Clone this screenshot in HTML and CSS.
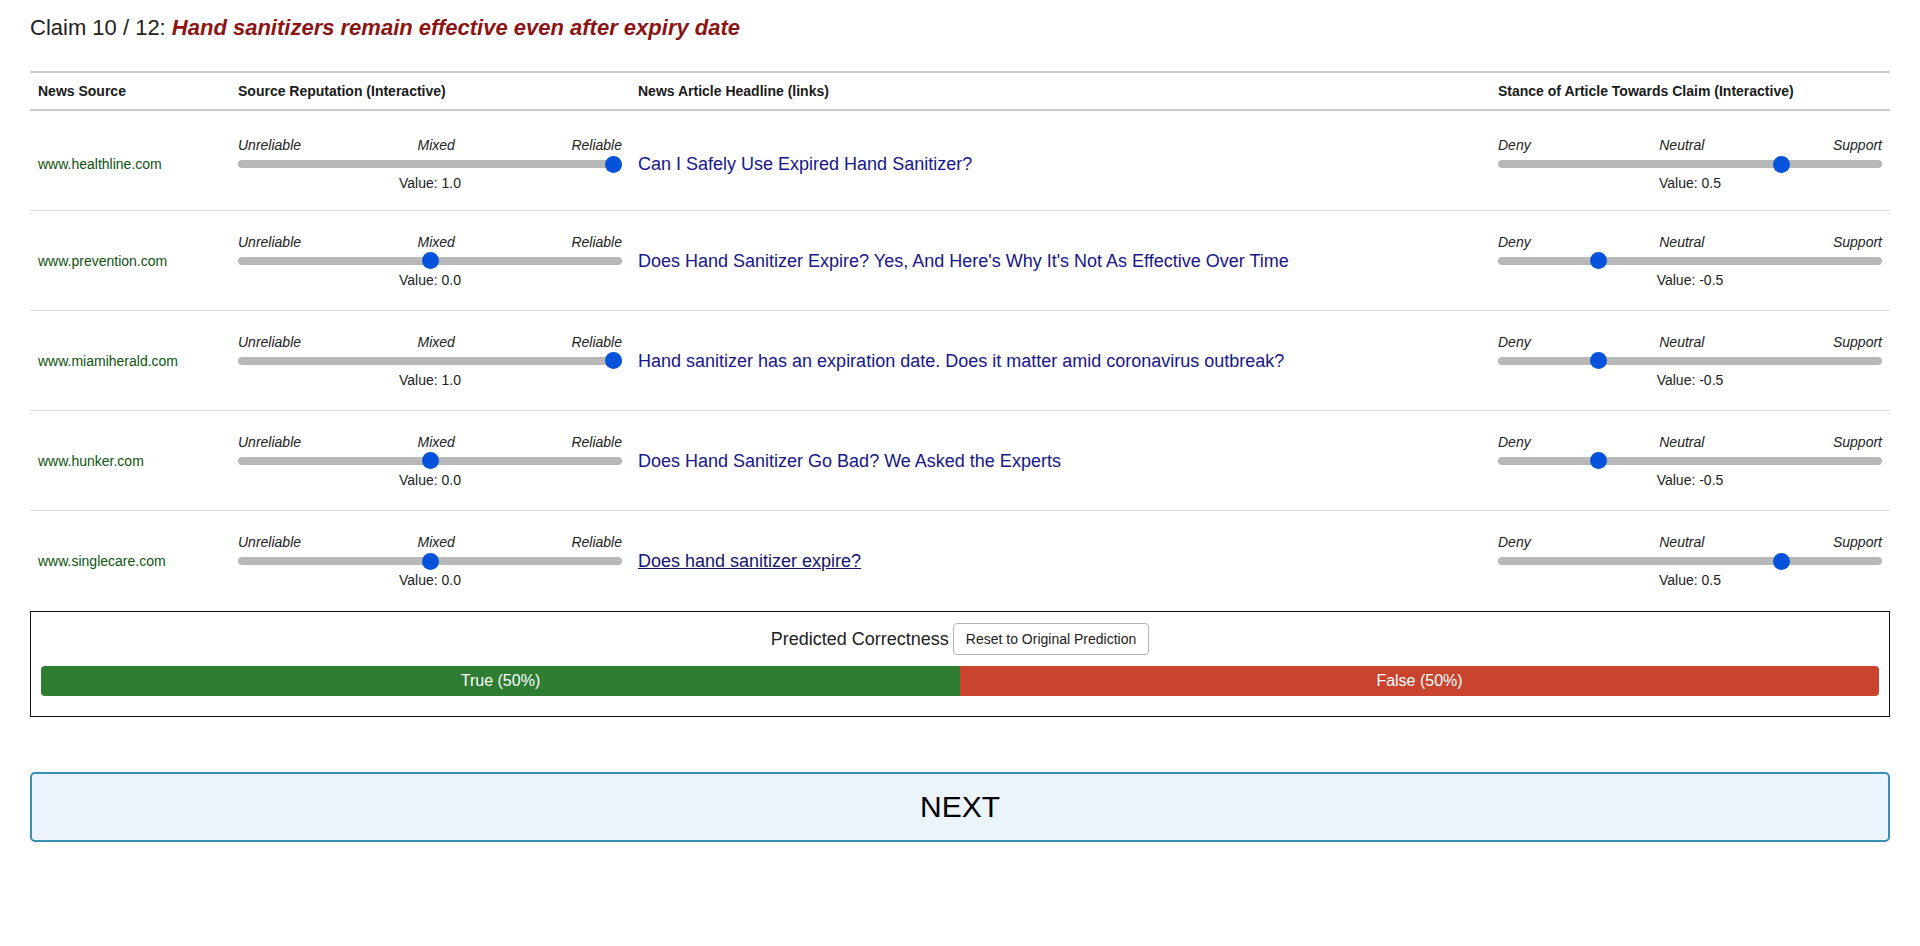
FILE: index.html
```html
<!DOCTYPE html>
<html lang="en">
<head>
<meta charset="utf-8">
<title>Claim 10 / 12</title>
<link rel="stylesheet" href="styles.css">
</head>
<body>
<div class="page">
  <h1 class="claim">Claim 10 / 12: <em class="claim-text">Hand sanitizers remain effective even after expiry date</em></h1>

  <div class="table">
    <div class="row head">
      <div class="cell">News Source</div>
      <div class="cell">Source Reputation (Interactive)</div>
      <div class="cell">News Article Headline (links)</div>
      <div class="cell">Stance of Article Towards Claim (Interactive)</div>
    </div>

    <div class="row first">
      <div class="cell source">www.healthline.com</div>
      <div class="cell">
        <div class="slider">
          <div class="labels"><span>Unreliable</span><span>Mixed</span><span>Reliable</span></div>
          <input class="range" type="range" min="-1" max="1" step="0.5" value="1">
          <div class="value">Value: 1.0</div>
        </div>
      </div>
      <div class="cell"><a class="headline" href="#">Can I Safely Use Expired Hand Sanitizer?</a></div>
      <div class="cell">
        <div class="slider">
          <div class="labels"><span>Deny</span><span>Neutral</span><span>Support</span></div>
          <input class="range" type="range" min="-1" max="1" step="0.5" value="0.5">
          <div class="value">Value: 0.5</div>
        </div>
      </div>
    </div>

    <div class="row">
      <div class="cell source">www.prevention.com</div>
      <div class="cell">
        <div class="slider">
          <div class="labels"><span>Unreliable</span><span>Mixed</span><span>Reliable</span></div>
          <input class="range" type="range" min="-1" max="1" step="0.5" value="0">
          <div class="value">Value: 0.0</div>
        </div>
      </div>
      <div class="cell"><a class="headline" href="#">Does Hand Sanitizer Expire? Yes, And Here's Why It's Not As Effective Over Time</a></div>
      <div class="cell">
        <div class="slider">
          <div class="labels"><span>Deny</span><span>Neutral</span><span>Support</span></div>
          <input class="range" type="range" min="-1" max="1" step="0.5" value="-0.5">
          <div class="value">Value: -0.5</div>
        </div>
      </div>
    </div>

    <div class="row">
      <div class="cell source">www.miamiherald.com</div>
      <div class="cell">
        <div class="slider">
          <div class="labels"><span>Unreliable</span><span>Mixed</span><span>Reliable</span></div>
          <input class="range" type="range" min="-1" max="1" step="0.5" value="1">
          <div class="value">Value: 1.0</div>
        </div>
      </div>
      <div class="cell"><a class="headline" href="#">Hand sanitizer has an expiration date. Does it matter amid coronavirus outbreak?</a></div>
      <div class="cell">
        <div class="slider">
          <div class="labels"><span>Deny</span><span>Neutral</span><span>Support</span></div>
          <input class="range" type="range" min="-1" max="1" step="0.5" value="-0.5">
          <div class="value">Value: -0.5</div>
        </div>
      </div>
    </div>

    <div class="row">
      <div class="cell source">www.hunker.com</div>
      <div class="cell">
        <div class="slider">
          <div class="labels"><span>Unreliable</span><span>Mixed</span><span>Reliable</span></div>
          <input class="range" type="range" min="-1" max="1" step="0.5" value="0">
          <div class="value">Value: 0.0</div>
        </div>
      </div>
      <div class="cell"><a class="headline" href="#">Does Hand Sanitizer Go Bad? We Asked the Experts</a></div>
      <div class="cell">
        <div class="slider">
          <div class="labels"><span>Deny</span><span>Neutral</span><span>Support</span></div>
          <input class="range" type="range" min="-1" max="1" step="0.5" value="-0.5">
          <div class="value">Value: -0.5</div>
        </div>
      </div>
    </div>

    <div class="row last">
      <div class="cell source">www.singlecare.com</div>
      <div class="cell">
        <div class="slider">
          <div class="labels"><span>Unreliable</span><span>Mixed</span><span>Reliable</span></div>
          <input class="range" type="range" min="-1" max="1" step="0.5" value="0">
          <div class="value">Value: 0.0</div>
        </div>
      </div>
      <div class="cell"><a class="headline hovered" href="#">Does hand sanitizer expire?</a></div>
      <div class="cell">
        <div class="slider">
          <div class="labels"><span>Deny</span><span>Neutral</span><span>Support</span></div>
          <input class="range" type="range" min="-1" max="1" step="0.5" value="0.5">
          <div class="value">Value: 0.5</div>
        </div>
      </div>
    </div>
  </div>

  <div class="prediction">
    <div class="prediction-head">
      <span class="prediction-title">Predicted Correctness</span>
      <button class="reset-btn" type="button">Reset to Original Prediction</button>
    </div>
    <div class="bar">
      <div class="bar-part bar-true" style="width: 50%">True (50%)</div>
      <div class="bar-part bar-false" style="width: 50%">False (50%)</div>
    </div>
  </div>

  <button class="next-btn" type="button">NEXT</button>
</div>
</body>
</html>
```

FILE: styles.css
```css
* {
  box-sizing: border-box;
}

html, body {
  margin: 0;
  padding: 0;
  background: #ffffff;
}

body {
  font-family: "Liberation Sans", Arial, sans-serif;
  color: #222222;
}

.page {
  padding: 15px 30px 0 30px;
}

.claim {
  margin: 0 0 30px 0;
  font-size: 22px;
  line-height: 26px;
  font-weight: normal;
  color: #222222;
}

.claim-text {
  font-weight: bold;
  font-style: italic;
  color: #8b1414;
}

.table {
  border-top: 2px solid #cccccc;
}

.row {
  display: grid;
  grid-template-columns: 200px 400px 860px 400px;
  align-items: center;
  height: 100px;
  padding-top: 0;
  border-bottom: 1px solid #dddddd;
}

.row.first {
  padding-top: 7px;
}

.row.head {
  height: 38px;
  padding-top: 0;
  border-bottom: 2px solid #cccccc;
  font-size: 14px;
  line-height: 16px;
  font-weight: bold;
  color: #1a1a1a;
}

.row.last {
  border-bottom: none;
}

.cell {
  padding: 0 8px;
  min-width: 0;
}

.source {
  font-size: 14px;
  line-height: 16px;
  color: #0d540d;
}

.headline {
  font-size: 18px;
  line-height: 22px;
  color: #16168a;
  text-decoration: none;
}

.headline.hovered {
  text-decoration: underline;
  color: #141470;
}

.slider {
  width: 384px;
  display: flex;
  flex-direction: column;
}

.labels {
  display: flex;
  justify-content: space-between;
  font-size: 14px;
  line-height: 16px;
  font-style: italic;
  color: #222222;
}

.value {
  text-align: center;
  font-size: 14px;
  line-height: 16px;
  color: #222222;
}

.range {
  -webkit-appearance: none;
  appearance: none;
  display: block;
  width: 384px;
  height: 22px;
  margin: 0;
  padding: 0;
  background: transparent;
}

.range::-webkit-slider-runnable-track {
  height: 8px;
  border-radius: 4px;
  background: #b8b8b8;
}

.range::-webkit-slider-thumb {
  -webkit-appearance: none;
  appearance: none;
  width: 17px;
  height: 17px;
  margin-top: -4.5px;
  border-radius: 50%;
  border: none;
  background: #0552db;
}

.prediction {
  border: 1px solid #111111;
  padding: 11px 10px 20px 10px;
}

.prediction-head {
  display: flex;
  justify-content: center;
  align-items: center;
  gap: 4px;
  height: 32px;
  margin-bottom: 11px;
}

.prediction-title {
  font-size: 18px;
  line-height: 22px;
  color: #222222;
}

.reset-btn {
  height: 32px;
  padding: 0 12px;
  font-family: "Liberation Sans", Arial, sans-serif;
  font-size: 14px;
  color: #222222;
  background: #ffffff;
  border: 1px solid #b4b4b4;
  border-radius: 4px;
}

.bar {
  display: flex;
  height: 30px;
  border-radius: 4px;
  overflow: hidden;
}

.bar-part {
  display: flex;
  align-items: center;
  justify-content: center;
  font-size: 16px;
  color: #ffffff;
}

.bar-true {
  background: #2e7d32;
}

.bar-false {
  background: #c9442f;
}

.next-btn {
  display: block;
  width: 100%;
  height: 70px;
  margin-top: 55px;
  font-family: "Liberation Sans", Arial, sans-serif;
  font-size: 30px;
  color: #000000;
  background: #ebf3fb;
  border: 2px solid #3a8db3;
  border-radius: 5px;
}
```
